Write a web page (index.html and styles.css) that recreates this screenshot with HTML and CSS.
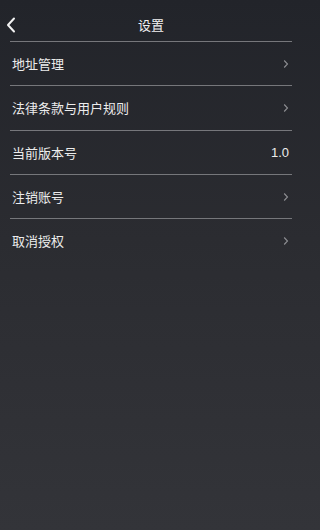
FILE: index.html
```html
<!DOCTYPE html>
<html lang="zh-CN">
<head>
<meta charset="utf-8">
<title>设置</title>
<link rel="stylesheet" href="styles.css">
</head>
<body>
<div class="page">
  <header class="header">
    <span class="back">
      <svg width="10" height="16" viewBox="0 0 10 16"><path d="M8 1.5 L2 8 L8 14.5" fill="none" stroke="#f2f2f2" stroke-width="2" stroke-linecap="round" stroke-linejoin="round"/></svg>
    </span>
    <h1 class="title">设置</h1>
  </header>
  <ul class="list">
    <li class="row"><span class="label">地址管理</span><span class="arrow"><svg width="6" height="10" viewBox="0 0 6 10"><path d="M1.2 1.5 L4.5 5 L1.2 8.5" fill="none" stroke="#8d8e92" stroke-width="1.1"/></svg></span></li>
    <li class="row"><span class="label">法律条款与用户规则</span><span class="arrow"><svg width="6" height="10" viewBox="0 0 6 10"><path d="M1.2 1.5 L4.5 5 L1.2 8.5" fill="none" stroke="#8d8e92" stroke-width="1.1"/></svg></span></li>
    <li class="row"><span class="label">当前版本号</span><span class="value">1.0</span></li>
    <li class="row"><span class="label">注销账号</span><span class="arrow"><svg width="6" height="10" viewBox="0 0 6 10"><path d="M1.2 1.5 L4.5 5 L1.2 8.5" fill="none" stroke="#8d8e92" stroke-width="1.1"/></svg></span></li>
    <li class="row last"><span class="label">取消授权</span><span class="arrow"><svg width="6" height="10" viewBox="0 0 6 10"><path d="M1.2 1.5 L4.5 5 L1.2 8.5" fill="none" stroke="#8d8e92" stroke-width="1.1"/></svg></span></li>
  </ul>
</div>
</body>
</html>
```

FILE: styles.css
```css
html, body {
  margin: 0;
  padding: 0;
}
body {
  width: 300px;
  height: 530px;
  overflow: hidden;
  font-family: "Noto Sans CJK SC", "Liberation Sans", sans-serif;
  background: linear-gradient(to bottom, #22242a 0%, #2b2c31 45%, #333439 100%);
  color: #e8e8e8;
}
.page {
  display: flex;
  flex-direction: column;
  height: 530px;
}
.header {
  position: relative;
  display: flex;
  align-items: center;
  justify-content: center;
  height: 18px;
  padding: 16px 0 7px;
  margin: 0 8px 0 10px;
  border-bottom: 1px solid #76777b;
}
.back {
  position: absolute;
  left: -4px;
  top: 17px;
  display: flex;
}
.title {
  margin: 0;
  font-size: 13px;
  font-weight: normal;
  color: #f2f2f2;
  line-height: 18px;
}
.list {
  list-style: none;
  margin: 0 8px 0 10px;
  padding: 0;
}
.row {
  display: flex;
  align-items: center;
  justify-content: space-between;
  height: 43.3px;
  padding: 0 3px 0 2px;
  border-bottom: 1px solid #76777b;
  font-size: 13px;
}
.row.last {
  border-bottom: none;
}
.label {
  color: #ececec;
}
.value {
  color: #ececec;
  font-family: "Liberation Sans", sans-serif;
  font-size: 13px;
}
.arrow {
  display: flex;
}
```
